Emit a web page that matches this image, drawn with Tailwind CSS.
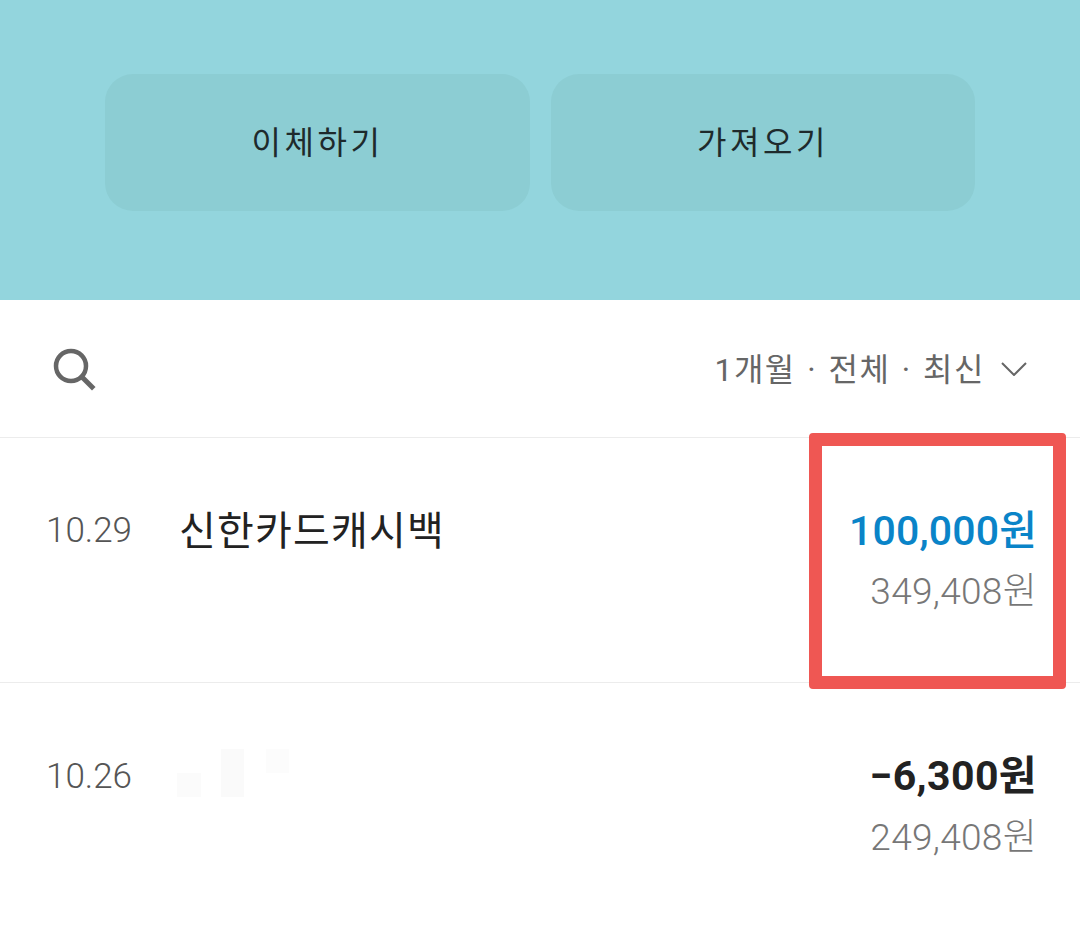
<!DOCTYPE html>
<html lang="ko">
<head>
  <meta charset="UTF-8" />
  <title>Account history</title>
  <script src="https://cdn.jsdelivr.net/npm/@tailwindcss/browser@4"></script>
</head>
<body class="bg-white font-['Roboto','Noto_Sans_CJK_KR',sans-serif]">
  <div class="relative h-[926px] w-[1080px] overflow-hidden">
    <!-- Top buttons -->
    <div class="flex h-[300px] gap-[21px] bg-[#93d5dd] pl-[105px] pr-[105px] pt-[74px]">
      <button class="flex h-[137px] w-[425px] items-center justify-center rounded-[28px] bg-[#8ccdd3] text-[32px] tracking-[3.5px] text-[#1e2a2c]">이체하기</button>
      <button class="flex h-[137px] w-[424px] items-center justify-center rounded-[28px] bg-[#8ccdd3] text-[32px] tracking-[3.5px] text-[#1e2a2c]">가져오기</button>
    </div>

    <!-- Search and filter -->
    <div class="flex h-[138px] items-center justify-between border-b border-[#ececec] pl-[52px] pr-[53px]">
      <svg class="h-[44px] w-[44px]" viewBox="0 0 44 44" fill="none" stroke="#666666" stroke-width="4.5">
        <circle cx="19" cy="19" r="15" />
        <path d="M30 30 L40 40" stroke-width="5" stroke-linecap="square" />
      </svg>
      <div class="flex items-center text-[#666666]">
        <span class="pt-[3px] text-[32px] leading-none tracking-[1.5px] [word-spacing:2px]">1개월 · 전체 · 최신</span>
        <svg class="ml-[16px] h-[14px] w-[26px]" viewBox="0 0 26 14" fill="none" stroke="#666666" stroke-width="2">
          <path d="M1 1 L13 13 L25 1" />
        </svg>
      </div>
    </div>

    <!-- Transactions -->
    <div class="flex h-[245px] border-b border-[#ececec] pl-[46px] pr-[43px] pt-[64px]">
      <div class="w-[133px] pt-[1px] text-[35px] font-light leading-[56px] text-[#555555]">10.29</div>
      <div class="flex-1 pt-[2px] text-[40px] leading-[56px] tracking-[1.2px] text-[#222222]">신한카드캐시백</div>
      <div class="text-right">
        <div class="text-[41px] font-medium leading-[58px] tracking-[0.15px] text-[#0a84c8]">100,000원</div>
        <div class="mt-[3px] text-[37px] font-light leading-[58px] tracking-[0.3px] text-[#777777]">349,408원</div>
      </div>
    </div>
    <div class="flex h-[243px] pl-[46px] pr-[43px] pt-[64px]">
      <div class="w-[131px] pt-[2px] text-[35px] font-light leading-[56px] text-[#555555]">10.26</div>
      <div class="relative flex-1">
        <!-- blurred-out name -->
        <div class="absolute left-0 top-[26px] h-[24px] w-[24px] bg-[#fbfbfb]"></div>
        <div class="absolute left-[44px] top-[2px] h-[48px] w-[23px] bg-[#fafafa]"></div>
        <div class="absolute left-[89px] top-[2px] h-[24px] w-[23px] bg-[#fcfcfc]"></div>
      </div>
      <div class="text-right">
        <div class="text-[41px] font-bold leading-[58px] tracking-[0.4px] text-[#222222]">−6,300원</div>
        <div class="mt-[4px] text-[37px] font-light leading-[58px] tracking-[0.3px] text-[#777777]">249,408원</div>
      </div>
    </div>

    <!-- Red highlight box drawn over the screenshot -->
    <div class="absolute left-[809px] top-[433px] h-[256px] w-[257px] rounded-[4px] border-[13px] border-[#ef5753]"></div>
  </div>
</body>
</html>
